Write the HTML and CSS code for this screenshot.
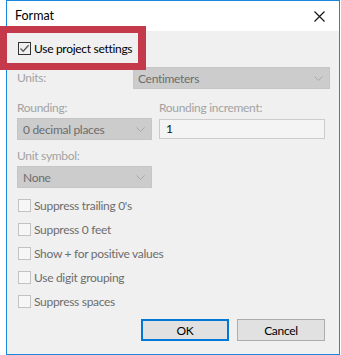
FILE: index.html
```html
<!DOCTYPE html>
<html lang="en">
<head>
  <meta charset="UTF-8">
  <title>Format</title>
  <link rel="stylesheet" href="styles.css">
</head>
<body>

  <div class="window">
    <div class="titlebar">
      <span class="title">Format</span>
      <svg class="close" width="11" height="11" viewBox="0 0 11 11">
        <path d="M0.5 0.5 L10.5 10.5 M10.5 0.5 L0.5 10.5" stroke="#111" stroke-width="1.1" fill="none"/>
      </svg>
    </div>

    <div class="content">
      <div class="check main">
        <span class="box on">
          <svg width="11" height="11" viewBox="0 0 11 11">
            <path d="M1.5 5.5 L4.2 8.3 L9.6 2.2" stroke="#5a5a5a" stroke-width="1.3" fill="none"/>
          </svg>
        </span>
        <span>Use project settings</span>
      </div>

      <div class="units">
        <span class="lbl units-lbl">Units:</span>
        <div class="select wide">
          <span>Centimeters</span>
          <svg class="chev" width="9" height="5" viewBox="0 0 9 5"><path d="M0.5 0.5 L4.5 4.5 L8.5 0.5" stroke="#a9a9a9" fill="none"/></svg>
        </div>
      </div>

      <div class="pair">
        <div class="field">
          <span class="lbl">Rounding:</span>
          <div class="select narrow">
            <span>0 decimal places</span>
            <svg class="chev" width="9" height="5" viewBox="0 0 9 5"><path d="M0.5 0.5 L4.5 4.5 L8.5 0.5" stroke="#a9a9a9" fill="none"/></svg>
          </div>
        </div>
        <div class="field">
          <span class="lbl">Rounding increment:</span>
          <div class="textbox">1</div>
        </div>
      </div>

      <div class="field symbol">
        <span class="lbl">Unit symbol:</span>
        <div class="select narrow">
          <span>None</span>
          <svg class="chev" width="9" height="5" viewBox="0 0 9 5"><path d="M0.5 0.5 L4.5 4.5 L8.5 0.5" stroke="#a9a9a9" fill="none"/></svg>
        </div>
      </div>

      <div class="options">
        <div class="check"><span class="box"></span><span>Suppress trailing 0's</span></div>
        <div class="check"><span class="box"></span><span>Suppress 0 feet</span></div>
        <div class="check"><span class="box"></span><span>Show + for positive values</span></div>
        <div class="check"><span class="box"></span><span>Use digit grouping</span></div>
        <div class="check"><span class="box"></span><span>Suppress spaces</span></div>
      </div>

      <div class="buttons">
        <button class="btn default">OK</button>
        <button class="btn">Cancel</button>
      </div>
    </div>
  </div>

  <!-- marker drawn over the dialog -->
  <div class="highlight"></div>

</body>
</html>
```

FILE: styles.css
```css
body {
  margin: 0;
  background: #ffffff;
  font-family: Lato, 'Liberation Sans', sans-serif;
  font-size: 12px;
  letter-spacing: -0.3px;
  position: relative;
}

.window {
  margin-left: 6px;
  width: 334px;
  height: 355px;
  box-sizing: border-box;
  border: 1px solid #1c86dc;
  background: #f0f0f0;
  display: flex;
  flex-direction: column;
}

.titlebar {
  height: 30px;
  background: #ffffff;
  display: flex;
  align-items: center;
  justify-content: space-between;
  padding: 0 14px 0 8px;
}

.title {
  color: #000;
  font-size: 12.5px;
  letter-spacing: 0;
  margin-top: -1px;
}

.content {
  padding: 11px 0 0 10px;
  color: #6d6d6d;
}

.check {
  display: flex;
  align-items: center;
  height: 24px;
  padding-left: 1px;
}

.check.main {
  height: 13px;
  color: #000;
}

.box {
  width: 13px;
  height: 13px;
  box-sizing: border-box;
  border: 1px solid #c2c2c2;
  background: #f6f6f6;
  margin-right: 3px;
  display: flex;
  align-items: center;
  justify-content: center;
}

.box.on {
  border-color: #333333;
  background: #f0f0f0;
}

.lbl {
  color: #a3a3a3;
  line-height: 16px;
}

.units {
  display: flex;
  align-items: center;
  margin-top: 12px;
}

.units-lbl {
  width: 116px;
}

.select {
  height: 22px;
  box-sizing: border-box;
  background: #cccccc;
  border: 1px solid #c6c6c6;
  display: flex;
  align-items: center;
  justify-content: space-between;
  padding: 0 6px 0 4px;
  color: #6d6d6d;
}

.select.wide {
  width: 197px;
}

.select.narrow {
  width: 135px;
  padding-left: 5px;
}

.pair {
  display: flex;
  gap: 7px;
  margin-top: 11px;
}

.field {
  display: flex;
  flex-direction: column;
  gap: 2px;
}

.textbox {
  width: 166px;
  height: 20px;
  margin-top: 1px;
  box-sizing: border-box;
  border: 1px solid #cccccc;
  background: #f4f4f4;
  color: #111;
  padding-left: 6px;
  line-height: 18px;
}

.symbol {
  margin-top: 8px;
}

.options {
  margin-top: 5px;
}

.buttons {
  display: flex;
  justify-content: flex-end;
  gap: 8px;
  padding-right: 14px;
  margin-top: 6px;
}

.btn {
  width: 88px;
  height: 22px;
  box-sizing: border-box;
  background: #e1e1e1;
  border: 1px solid #adadad;
  font-family: inherit;
  font-size: 12px;
  letter-spacing: inherit;
  color: #000;
  padding: 0;
}

.btn.default {
  border: 2px solid #0078d7;
}

.highlight {
  position: absolute;
  left: 0;
  top: 26px;
  width: 146px;
  height: 44px;
  box-sizing: border-box;
  border: 7px solid #c43a4a;
  border-right-width: 8px;
}
```
